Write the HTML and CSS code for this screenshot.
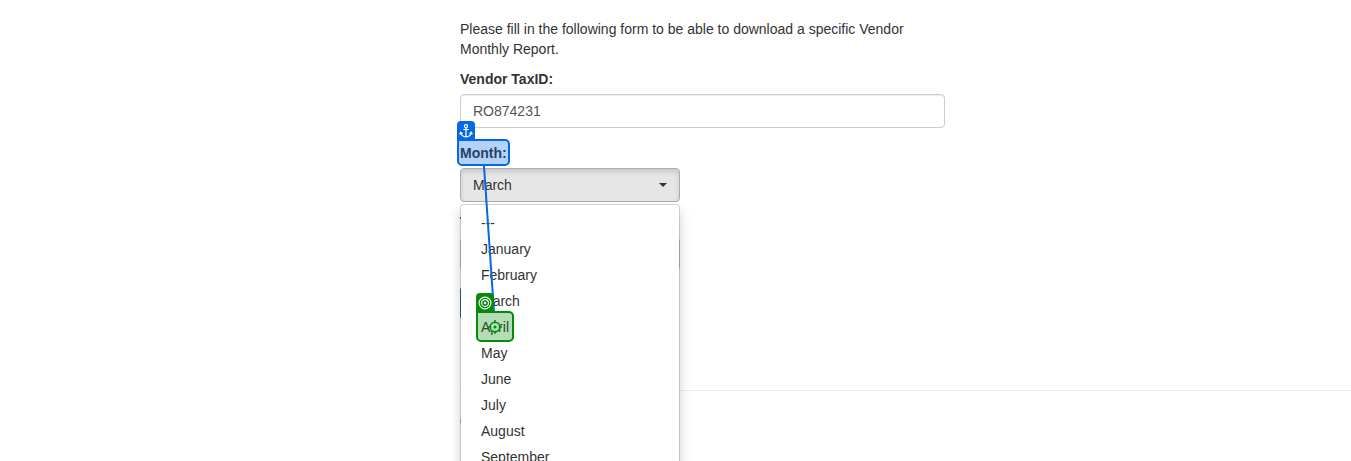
FILE: index.html
```html
<!DOCTYPE html>
<html lang="en">
<head>
<meta charset="utf-8">
<title>Vendor Monthly Report</title>
<link rel="stylesheet" href="styles.css">
</head>
<body>
<main class="content">
  <form class="report-form">
    <p class="intro">Please fill in the following form to be able to download a specific Vendor Monthly Report.</p>
    <div class="group">
      <label class="label" for="taxid">Vendor TaxID:</label>
      <input class="control" id="taxid" type="text" value="RO874231">
    </div>
    <div class="group month">
      <label class="label" for="month"><span class="marked">Month:<span class="mark mark-anchor"><span class="tab"><svg width="14" height="14" viewBox="0 0 14 14" fill="none" stroke="#fff" stroke-width="1.200"><circle cx="7" cy="2.200" r="1.500"/><path d="M7 3.700v9M4.300 5.500h5.400M1.700 8.500c.4 2.900 2.600 4.300 5.300 4.300s4.900-1.400 5.300-4.300M.7 10.300l1-2.100 1.800 1.500M13.300 10.300l-1-2.100-1.800 1.500"/></svg></span></span></span></label>
      <div class="picker">
        <button class="select-button" id="month" type="button" aria-expanded="true">March<span class="caret"></span></button>
        <ul class="menu">
          <li><a href="#">---</a></li>
          <li><a href="#">January</a></li>
          <li><a href="#">February</a></li>
          <li><a href="#">March</a></li>
          <li><a href="#"><span class="marked">April<span class="mark mark-target"><span class="tab"><svg width="14" height="14" viewBox="0 0 14 14" fill="none" stroke="#fff" stroke-width="1.100"><circle cx="7" cy="7" r="5.900"/><circle cx="7" cy="7" r="3.400"/><circle cx="7" cy="7" r="1.200" fill="#fff" stroke="none"/></svg></span><svg class="crosshair" width="14" height="14" viewBox="0 0 14 14" fill="none" stroke="#078a0b" stroke-width="1.500"><circle cx="7" cy="7" r="4.800" fill="#b4dcb5"/><path d="M7 0v3.200M7 10.800V14M0 7h3.200M10.800 7H14"/><circle cx="7" cy="7" r="1.500" fill="#078a0b" stroke="none"/></svg></span></span></a></li>
          <li><a href="#">May</a></li>
          <li><a href="#">June</a></li>
          <li><a href="#">July</a></li>
          <li><a href="#">August</a></li>
          <li><a href="#">September</a></li>
        </ul>
        <svg class="link-line" width="20" height="148" viewBox="0 0 20 148"><path d="M4 0L14 146" stroke="#0568e4" stroke-width="2"/></svg>
      </div>
    </div>
    <div class="group">
      <label class="label" for="type">Type:</label>
      <button class="select-button plain" id="type" type="button"></button>
    </div>
    <button class="submit" type="submit" aria-label="Download"></button>
  </form>
  <hr class="rule">
  <div class="dot"></div>
</main>
</body>
</html>
```
FILE: styles.css
```css
* { box-sizing: border-box; }
body {
  margin: 0;
  height: 100vh;
  overflow: hidden;
  background: #fff;
  color: #333;
  font: 14px/20px "Liberation Sans", Arial, sans-serif;
}
.content { padding: 19px 0 0 460px; }
.report-form { max-width: 485px; }
.intro { margin: 0 0 10px; }
.group { margin-bottom: 15px; }
.month { margin-bottom: 10px; }
.label { display: block; margin-bottom: 5px; font-weight: bold; }
.control {
  display: block;
  width: 100%;
  height: 34px;
  padding: 6px 12px;
  border: 1px solid #ccc;
  border-radius: 4px;
  background: #fff;
  box-shadow: inset 0 1px 1px rgba(0, 0, 0, .075);
  color: #555;
  font: inherit;
}
.picker { position: relative; width: 220px; }
.select-button {
  display: flex;
  align-items: center;
  justify-content: space-between;
  width: 220px;
  height: 34px;
  padding: 6px 12px;
  border: 1px solid #adadad;
  border-radius: 4px;
  background: #e6e6e6;
  box-shadow: inset 0 3px 5px rgba(0, 0, 0, .125);
  color: #333;
  font: inherit;
}
.plain { border-color: #ccc; background: #fff; box-shadow: none; }
.caret {
  border-top: 4px solid #333;
  border-left: 4px solid transparent;
  border-right: 4px solid transparent;
}
.menu {
  position: absolute;
  top: 36px;
  left: 0;
  width: 100%;
  margin: 0;
  padding: 5px 0;
  border: 1px solid rgba(0, 0, 0, .15);
  border-radius: 4px;
  background: #fff;
  background-clip: padding-box;
  box-shadow: 0 6px 12px rgba(0, 0, 0, .175);
  list-style: none;
}
.menu a { display: block; padding: 3px 20px; color: #333; text-decoration: none; }
.marked { position: relative; display: inline-block; }
.mark {
  position: absolute;
  z-index: 2;
  display: flex;
  align-items: center;
  justify-content: center;
  border: 2px solid;
  border-radius: 0 5px 5px;
}
.mark-anchor { inset: -4px -3px -3px; border-color: #0568e4; background: rgba(5, 104, 228, .3); }
.mark-target { inset: -6px -5px -5px; border-color: #078a0b; background: rgba(7, 138, 11, .3); }
.tab {
  position: absolute;
  left: -2px;
  bottom: 100%;
  display: flex;
  align-items: center;
  justify-content: center;
  width: 18px;
  height: 20px;
  border-radius: 4px 4px 0 0;
}
.mark-anchor .tab { background: #0568e4; }
.mark-target .tab { background: #078a0b; }
.link-line { position: absolute; z-index: 1; top: -2px; left: 20px; pointer-events: none; }
.submit {
  display: block;
  width: 100px;
  height: 34px;
  border: 1px solid #2e6da4;
  border-radius: 4px;
  background: #337ab7;
}
.rule { margin: 70px 0 26px; border: 0; border-top: 1px solid #eee; }
.dot { width: 8px; height: 8px; border-radius: 4px; background: #f0ad4e; }
```
